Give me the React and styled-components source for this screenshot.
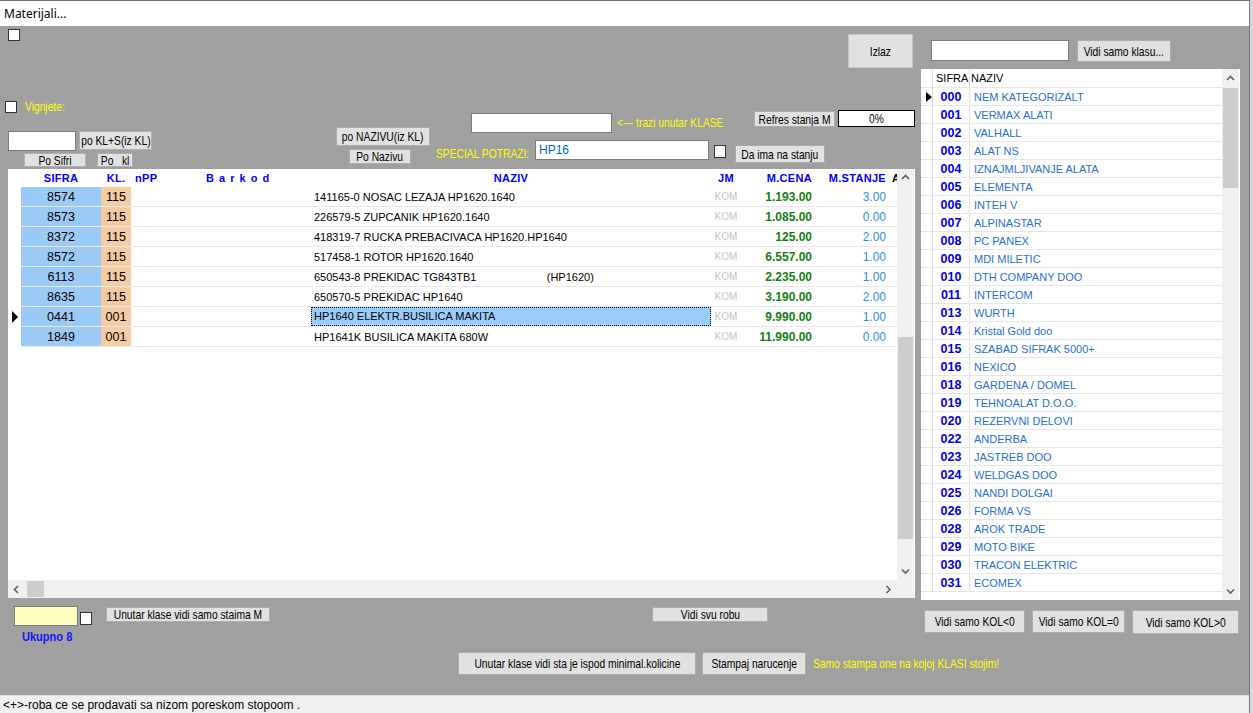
import React from "react";
import styled, { createGlobalStyle } from "styled-components";

// fonts
const ARIAL = `"Liberation Sans", Arial, sans-serif`;

const GlobalStyle = createGlobalStyle`
  html, body {
    margin: 0;
    padding: 0;
    background: #d6d8de;
  }
  body {
    font-family: ${ARIAL};
  }
  * {
    box-sizing: border-box;
  }
`;

const materials = [
  { sifra: "8574", kl: "115", naziv: "141165-0 NOSAC LEZAJA HP1620.1640", cena: "1.193.00", stanje: "3.00" },
  { sifra: "8573", kl: "115", naziv: "226579-5 ZUPCANIK HP1620.1640", cena: "1.085.00", stanje: "0.00" },
  { sifra: "8372", kl: "115", naziv: "418319-7 RUCKA PREBACIVACA HP1620.HP1640", cena: "125.00", stanje: "2.00" },
  { sifra: "8572", kl: "115", naziv: "517458-1 ROTOR HP1620.1640", cena: "6.557.00", stanje: "1.00" },
  { sifra: "6113", kl: "115", naziv: "650543-8 PREKIDAC TG843TB1                       (HP1620)", cena: "2.235.00", stanje: "1.00" },
  { sifra: "8635", kl: "115", naziv: "650570-5 PREKIDAC HP1640", cena: "3.190.00", stanje: "2.00" },
  { sifra: "0441", kl: "001", naziv: "HP1640 ELEKTR.BUSILICA MAKITA", cena: "9.990.00", stanje: "1.00", current: true },
  { sifra: "1849", kl: "001", naziv: "HP1641K BUSILICA MAKITA 680W", cena: "11.990.00", stanje: "0.00" },
];

const klase = [
  ["000", "NEM KATEGORIZÁLT"],
  ["001", "VERMAX ALATI"],
  ["002", "VALHALL"],
  ["003", "ALAT NS"],
  ["004", "IZNAJMLJIVANJE ALATA"],
  ["005", "ELEMENTA"],
  ["006", "INTEH V"],
  ["007", "ALPINASTAR"],
  ["008", "PC PANEX"],
  ["009", "MDI MILETIC"],
  ["010", "DTH COMPANY DOO"],
  ["011", "INTERCOM"],
  ["013", "WURTH"],
  ["014", "Kristal Gold doo"],
  ["015", "SZABAD SIFRAK 5000+"],
  ["016", "NEXICO"],
  ["018", "GARDENA / DOMEL"],
  ["019", "TEHNOALAT D.O.O."],
  ["020", "REZERVNI DELOVI"],
  ["022", "ANDERBA"],
  ["023", "JASTREB DOO"],
  ["024", "WELDGAS DOO"],
  ["025", "NANDI DOLGAI"],
  ["026", "FORMA VS"],
  ["028", "AROK TRADE"],
  ["029", "MOTO BIKE"],
  ["030", "TRACON ELEKTRIC"],
  ["031", "ECOMEX"],
];

function Chevron({ dir }) {
  const pts = {
    up: "1,5 4.5,1.5 8,5",
    down: "1,1.5 4.5,5 8,1.5",
    left: "5,1 1.5,4.5 5,8",
    right: "1.5,1 5,4.5 1.5,8",
  }[dir];
  const vertical = dir === "up" || dir === "down";
  return (
    <svg width={vertical ? 9 : 7} height={vertical ? 7 : 9} viewBox={vertical ? "0 0 9 7" : "0 0 7 9"}>
      <polyline points={pts} fill="none" stroke="#606060" strokeWidth="1.6" />
    </svg>
  );
}

// condensed caption, the form uses a narrow face
function Btn({ children, ...rest }) {
  return (
    <Button {...rest}>
      <Squeeze>{children}</Squeeze>
    </Button>
  );
}

export default function App() {
  return (
    <>
      <GlobalStyle />
      <Window>
        <TitleBar>Materijali...</TitleBar>
        <Body>
          <LeftPane>
            <TopArea>
              <LeftCol>
                <CheckBox $ml={8} $mt={3} />
                <VignRow>
                  <CheckBox />
                  <YellowLabel>Vignjete:</YellowLabel>
                </VignRow>
                <Row $mt={17} $ml={8}>
                  <Field $w={68} $h={20} />
                  <Btn $w={73} $h={19} $ml={3}>po KL+S(iz KL)</Btn>
                </Row>
                <Row $mt={2}>
                  <Btn $w={62} $h={14} $ml={24}>Po Sifri</Btn>
                  <Btn $w={36} $h={14} $ml={11}>Po&nbsp;&nbsp;&nbsp;kl</Btn>
                </Row>
              </LeftCol>

              <MidCol>
                <Btn $w={94} $h={19}>po NAZIVU(iz KL)</Btn>
                <Btn $w={62} $h={15} $ml={13} $mt={3}>Po Nazivu</Btn>
              </MidCol>

              <SearchCol>
                <IzlazRow>
                  <Btn $w={65} $h={34} $soft>Izlaz</Btn>
                </IzlazRow>
                <Row $mt={42} $h={23}>
                  <Field $w={141} $h={20} $ml={35} $mt={3} />
                  <YellowLabel $ml={5} $mt={3} $lh={20}>&lt;--- trazi unutar KLASE</YellowLabel>
                  <Btn $w={81} $h={16} $ml="auto" $mt={1}>Refres stanja M</Btn>
                  <Progress>
                    <Squeeze>0%</Squeeze>
                  </Progress>
                </Row>
                <Row $mt={7}>
                  <YellowLabel $w={99} $mt={4} $lh={20}>SPECIAL POTRAZI:</YellowLabel>
                  <Field $w={174} $h={20} $color="#0066cc" defaultValue="HP16" />
                  <CheckBox $ml={5} $mt={5} $size={13} />
                  <Btn $w={90} $h={18} $ml={9} $mt={5}>Da ima na stanju</Btn>
                </Row>
              </SearchCol>
            </TopArea>

            <GridFrame>
              <GridBody>
                <MainRow $header>
                  <Cell $plain />
                  <HeadCell $align="center">SIFRA</HeadCell>
                  <HeadCell $align="center">KL.</HeadCell>
                  <HeadCell $pl={4}>nPP</HeadCell>
                  <HeadCell $pl={30} $spaced>B a r k o d</HeadCell>
                  <HeadCell $align="center">NAZIV</HeadCell>
                  <HeadCell $align="center">JM</HeadCell>
                  <HeadCell $align="right" $pr={3}>M.CENA</HeadCell>
                  <HeadCell $align="right" $pr={4}>M.STANJE</HeadCell>
                  <HeadCell $pl={2} $clip>AKC</HeadCell>
                </MainRow>
                {materials.map((m) => (
                  <MainRow key={m.sifra}>
                    <Cell $plain>{m.current && <Pointer />}</Cell>
                    <Cell $bg="#9ccaf7" $align="center" $size={12.5}>{m.sifra}</Cell>
                    <Cell $bg="#f6cca2" $align="center" $size={12.5}>{m.kl}</Cell>
                    <Cell />
                    <Cell />
                    <Cell $pl={3} $size={11}>
                      {m.current ? <Selected>{m.naziv}</Selected> : m.naziv}
                    </Cell>
                    <Cell $align="center" $size={10} $color="#c4c4c4">KOM</Cell>
                    <Cell $align="right" $pr={3} $size={12} $bold $color="#118011">{m.cena}</Cell>
                    <Cell $align="right" $pr={4} $size={12} $color="#2a8cf0">{m.stanje}</Cell>
                    <Cell />
                  </MainRow>
                ))}
              </GridBody>
              <VScroll>
                <ArrowBox $h={17}><Chevron dir="up" /></ArrowBox>
                <ScrollTrack>
                  <VThumb $top={151} $h={202} />
                </ScrollTrack>
                <ArrowBox $h={17}><Chevron dir="down" /></ArrowBox>
              </VScroll>
              <HScroll>
                <ArrowBox $w={17}><Chevron dir="left" /></ArrowBox>
                <HThumb />
                <ArrowBox $w={17} $ml="auto"><Chevron dir="right" /></ArrowBox>
              </HScroll>
              <Corner />
            </GridFrame>

            <BottomArea>
              <Row $mt={8}>
                <Field $w={64} $h={20} $ml={14} $bg="#ffffc0" />
                <CheckBox $ml={2} $mt={6} $size={13} />
                <Btn $w={164} $h={15} $ml={14} $mt={1}>Unutar klase vidi samo staima M</Btn>
                <Btn $w={116} $h={15} $ml={382} $mt={1}>Vidi svu robu</Btn>
              </Row>
              <Total>Ukupno 8</Total>
              <Row $mt={8}>
                <Btn $w={238} $h={23} $ml={458}>Unutar klase vidi sta je ispod minimal.kolicine</Btn>
                <Btn $w={104} $h={23} $ml={6}>Stampaj narucenje</Btn>
                <YellowLabel $ml={7} $lh={23}>Samo stampa one na kojoj KLASI stojim!</YellowLabel>
              </Row>
            </BottomArea>
          </LeftPane>

          <RightPane>
            <Row $mt={14}>
              <Field $w={138} $h={21} $ml={13} />
              <Btn $w={94} $h={22} $ml={8}>Vidi samo klasu...</Btn>
            </Row>
            <KlaseFrame>
              <KlaseBody>
                <KlaseRow $header>
                  <KCell />
                  <KCell $pl={3}>SIFRA</KCell>
                  <KCell $pl={1} $last>NAZIV</KCell>
                </KlaseRow>
                {klase.map(([code, name], i) => (
                  <KlaseRow key={code}>
                    <KCell>{i === 0 && <Pointer $small />}</KCell>
                    <KCell $code>{code}</KCell>
                    <KCell $pl={4} $last $name>{name}</KCell>
                  </KlaseRow>
                ))}
              </KlaseBody>
              <VScroll>
                <ArrowBox $h={18}><Chevron dir="up" /></ArrowBox>
                <ScrollTrack>
                  <VThumb $top={1} $h={100} />
                </ScrollTrack>
                <ArrowBox $h={17}><Chevron dir="down" /></ArrowBox>
              </VScroll>
            </KlaseFrame>
            <Row $mt={10}>
              <Btn $w={101} $h={23} $ml={6}>Vidi samo KOL&lt;0</Btn>
              <Btn $w={93} $h={23} $ml={7}>Vidi samo KOL=0</Btn>
              <Btn $w={107} $h={24} $ml={7}>Vidi samo KOL&gt;0</Btn>
            </Row>
          </RightPane>
        </Body>
        <StatusBar>&lt;+&gt;-roba ce se prodavati sa nizom poreskom stopoom .</StatusBar>
      </Window>
    </>
  );
}

const px = (v) => (typeof v === "number" ? `${v}px` : v);

const Window = styled.div`
  width: 1250px;
  height: 713px;
  display: flex;
  flex-direction: column;
  background: #a0a0a0;
  border-top: 1px solid #6e6e6e;
  border-right: 1px solid #7a7a7a;
  overflow: hidden;
`;

const TitleBar = styled.div`
  height: 25px;
  flex-shrink: 0;
  background: #fff;
  padding: 4px 0 0 4px;
  font-family: "Noto Sans", "Open Sans", sans-serif;
  font-size: 12px;
  color: #000;
`;

const Body = styled.div`
  flex: 1;
  display: flex;
  min-height: 0;
`;

const StatusBar = styled.div`
  height: 18px;
  flex-shrink: 0;
  background: #f0f0f0;
  border-top: 1px solid #dadada;
  padding: 2px 0 0 3px;
  font-family: ${ARIAL};
  font-size: 12px;
  color: #000;
`;

const LeftPane = styled.div`
  width: 918px;
  display: flex;
  flex-direction: column;
`;

const RightPane = styled.div`
  flex: 1;
  display: flex;
  flex-direction: column;
`;

const TopArea = styled.div`
  height: 143px;
  display: flex;
`;

const LeftCol = styled.div`
  width: 160px;
  display: flex;
  flex-direction: column;
  align-items: flex-start;
`;

const MidCol = styled.div`
  width: 95px;
  margin-left: 176px;
  display: flex;
  flex-direction: column;
  justify-content: flex-end;
  align-items: flex-start;
  padding-bottom: 5px;
`;

const SearchCol = styled.div`
  flex: 1;
  margin-left: 5px;
  padding-right: 3px;
  display: flex;
  flex-direction: column;
`;

const IzlazRow = styled.div`
  display: flex;
  justify-content: flex-end;
  margin-top: 8px;
  padding-right: 2px;
`;

const Row = styled.div`
  display: flex;
  align-items: flex-start;
  margin-top: ${(p) => px(p.$mt || 0)};
  margin-left: ${(p) => px(p.$ml || 0)};
  height: ${(p) => (p.$h ? px(p.$h) : "auto")};
`;

const VignRow = styled.div`
  display: flex;
  align-items: center;
  gap: 8px;
  margin: 58px 0 0 5px;
`;

const CheckBox = styled.span`
  display: block;
  flex-shrink: 0;
  width: 12px;
  height: ${(p) => p.$size || 12}px;
  margin-left: ${(p) => p.$ml || 0}px;
  margin-top: ${(p) => p.$mt || 0}px;
  background: #fff;
  border: 1px solid #333;
`;

const Squeeze = styled.span`
  display: inline-block;
  white-space: nowrap;
  font-size: 13px;
  transform: scaleX(0.79);
  transform-origin: center;
`;

const YellowLabel = styled.span`
  display: block;
  flex-shrink: 0;
  width: ${(p) => (p.$w ? px(p.$w) : "auto")};
  margin-left: ${(p) => px(p.$ml || 0)};
  margin-top: ${(p) => px(p.$mt || 0)};
  line-height: ${(p) => (p.$lh ? px(p.$lh) : "normal")};
  font-family: ${ARIAL};
  font-size: 13px;
  color: #ffff00;
  white-space: nowrap;
  transform: scaleX(0.79);
  transform-origin: left center;
`;

const Button = styled.button`
  flex-shrink: 0;
  display: flex;
  align-items: center;
  justify-content: center;
  width: ${(p) => p.$w}px;
  height: ${(p) => p.$h}px;
  margin-left: ${(p) => px(p.$ml || 0)};
  margin-top: ${(p) => px(p.$mt || 0)};
  padding: 0;
  background: #e1e1e1;
  border: 1px solid ${(p) => (p.$soft ? "#c6c6c6" : "#adadad")};
  font-family: ${ARIAL};
  line-height: 1;
  color: #000;
  overflow: hidden;
`;

const Field = styled.input.attrs({ readOnly: true })`
  flex-shrink: 0;
  width: ${(p) => p.$w}px;
  height: ${(p) => p.$h}px;
  margin-left: ${(p) => px(p.$ml || 0)};
  margin-top: ${(p) => px(p.$mt || 0)};
  padding: 0 3px;
  background: ${(p) => p.$bg || "#fff"};
  border: 1px solid #7a7a7a;
  outline: none;
  font-family: ${ARIAL};
  font-size: 12px;
  color: ${(p) => p.$color || "#000"};
`;

const Progress = styled.div`
  display: flex;
  align-items: center;
  justify-content: center;
  width: 77px;
  height: 17px;
  margin-left: 3px;
  background: #fff;
  border: 1px solid #000;
  font-family: ${ARIAL};
  color: #000;
`;

// main materials grid
const MAIN_COLS = "13px 80px 30px 45px 135px 400px 30px 74px 75px 7px";

const GridFrame = styled.div`
  width: 907px;
  height: 429px;
  margin-left: 8px;
  background: #fff;
  display: grid;
  grid-template-columns: 889px 17px;
  grid-template-rows: 411px 18px;
`;

const GridBody = styled.div`
  overflow: hidden;
`;

const MainRow = styled.div`
  display: grid;
  grid-template-columns: ${MAIN_COLS};
  height: ${(p) => (p.$header ? 18 : 20)}px;
`;

const Cell = styled.div`
  display: flex;
  align-items: center;
  justify-content: ${(p) =>
    p.$align === "center" ? "center" : p.$align === "right" ? "flex-end" : "flex-start"};
  padding-left: ${(p) => p.$pl || 0}px;
  padding-right: ${(p) => p.$pr || 0}px;
  background: ${(p) => p.$bg || "transparent"};
  border-bottom: ${(p) => (p.$plain ? "none" : "1px solid #e8e8e8")};
  font-family: ${ARIAL};
  font-size: ${(p) => p.$size || 11}px;
  font-weight: ${(p) => (p.$bold ? 700 : 400)};
  color: ${(p) => p.$color || "#000"};
  white-space: pre;
  overflow: hidden;
`;

const HeadCell = styled.div`
  display: flex;
  align-items: center;
  justify-content: ${(p) =>
    p.$align === "center" ? "center" : p.$align === "right" ? "flex-end" : "flex-start"};
  padding-left: ${(p) => p.$pl || 0}px;
  padding-right: ${(p) => p.$pr || 0}px;
  font-family: ${ARIAL};
  font-size: 11px;
  font-weight: 700;
  letter-spacing: ${(p) => (p.$spaced ? "1px" : "0.3px")};
  color: ${(p) => (p.$clip ? "#000" : "#0000ff")};
  white-space: nowrap;
  overflow: hidden;
`;

const Selected = styled.span`
  display: block;
  margin-left: -3px;
  width: 400px;
  height: 19px;
  padding: 2px 0 0 2px;
  background: #9accfc;
  border: 1px dotted #000;
`;

const Pointer = styled.span`
  display: block;
  margin-left: ${(p) => (p.$small ? 5 : 4)}px;
  width: 0;
  height: 0;
  border-top: ${(p) => (p.$small ? 5 : 6)}px solid transparent;
  border-bottom: ${(p) => (p.$small ? 5 : 6)}px solid transparent;
  border-left: 6px solid #000;
`;

const VScroll = styled.div`
  display: flex;
  flex-direction: column;
  background: #f0f0f0;
`;

const ArrowBox = styled.div`
  flex-shrink: 0;
  width: ${(p) => (p.$w ? px(p.$w) : "auto")};
  height: ${(p) => (p.$h ? px(p.$h) : "auto")};
  margin-left: ${(p) => px(p.$ml || 0)};
  display: flex;
  align-items: center;
  justify-content: center;
`;

const ScrollTrack = styled.div`
  flex: 1;
  padding: 0 1px;
`;

const VThumb = styled.div`
  margin-top: ${(p) => p.$top}px;
  height: ${(p) => p.$h}px;
  background: #cdcdcd;
`;

const HScroll = styled.div`
  display: flex;
  align-items: stretch;
  background: #f0f0f0;
`;

const HThumb = styled.div`
  width: 17px;
  margin: 1px 0 1px 2px;
  background: #cdcdcd;
`;

const Corner = styled.div`
  background: #f0f0f0;
`;

const BottomArea = styled.div`
  flex: 1;
  display: flex;
  flex-direction: column;
`;

const Total = styled.div`
  margin: 4px 0 0 22px;
  line-height: 14px;
  font-family: ${ARIAL};
  font-size: 12px;
  font-weight: 700;
  color: #1414ff;
  transform: scaleX(0.92);
  transform-origin: left center;
`;

// right class list
const KlaseFrame = styled.div`
  width: 319px;
  height: 531px;
  margin: 7px 0 0 3px;
  background: #fff;
  display: grid;
  grid-template-columns: 301px 17px;
`;

const KlaseBody = styled.div`
  overflow: hidden;
`;

const KlaseRow = styled.div`
  display: grid;
  grid-template-columns: 12px 37px 252px;
  height: ${(p) => (p.$header ? 19 : 18)}px;
`;

const KCell = styled.div`
  display: flex;
  align-items: center;
  justify-content: ${(p) => (p.$code ? "center" : "flex-start")};
  padding-left: ${(p) => p.$pl || 0}px;
  border-bottom: 1px solid #e6e6e6;
  border-right: ${(p) => (p.$last ? "none" : "1px solid #e2e2e2")};
  font-family: ${ARIAL};
  font-size: ${(p) => (p.$code ? 12.5 : 11)}px;
  font-weight: ${(p) => (p.$code ? 700 : 400)};
  color: ${(p) => (p.$code ? "#0000e8" : p.$name ? "#1f6fd4" : "#000")};
  white-space: nowrap;
  overflow: hidden;
`;
